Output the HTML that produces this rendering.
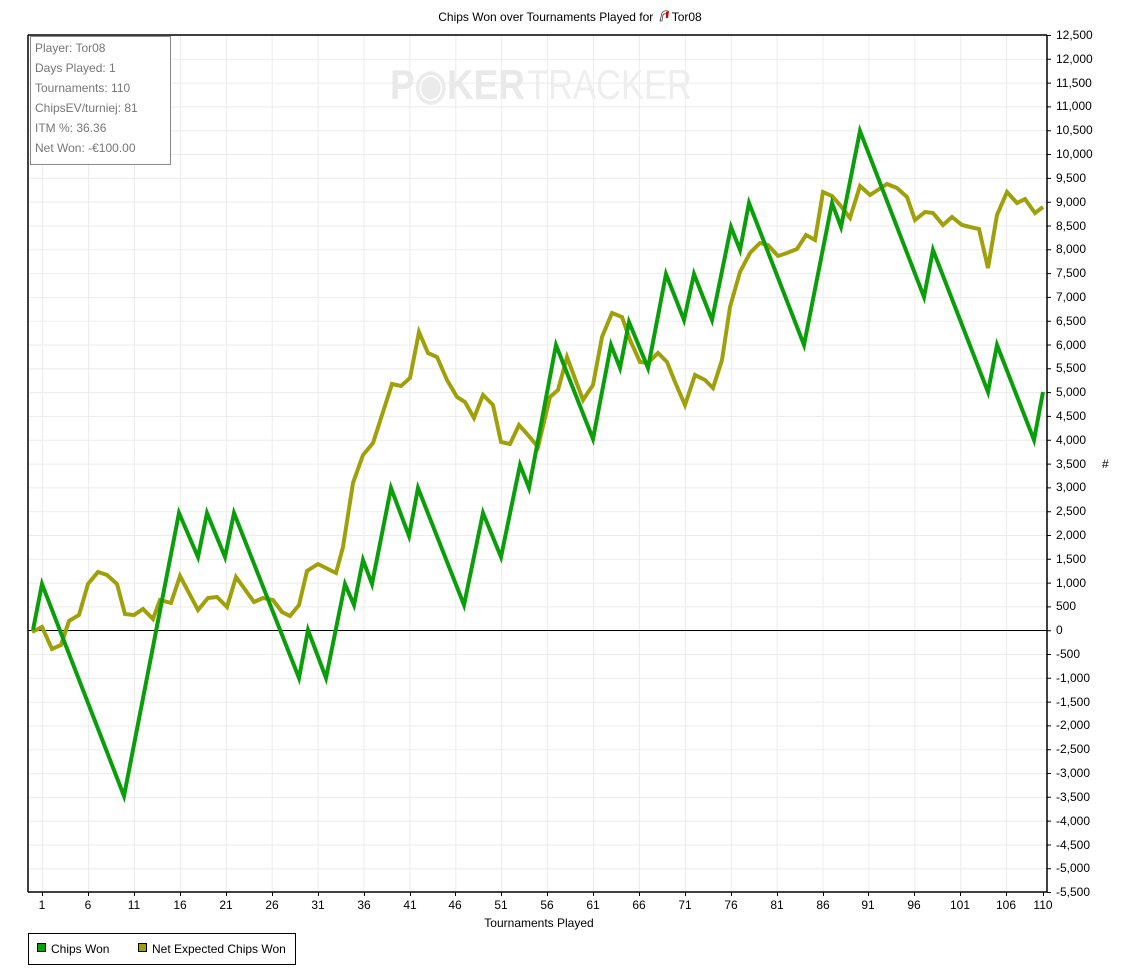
<!DOCTYPE html>
<html><head><meta charset="utf-8"><style>
html,body{margin:0;padding:0;background:#fff;}
svg{display:block;font-family:"Liberation Sans",sans-serif;}
</style></head><body>
<svg width="1132" height="980" viewBox="0 0 1132 980" xmlns="http://www.w3.org/2000/svg">
<defs>
<pattern id="gh" x="0" y="35" width="2000" height="23.81" patternUnits="userSpaceOnUse"><line x1="0" y1="0.5" x2="2000" y2="0.5" stroke="#ececec" stroke-width="1"/></pattern>
<pattern id="gv" x="42.2" y="0" width="45.9" height="2000" patternUnits="userSpaceOnUse"><line x1="0.5" y1="0" x2="0.5" y2="2000" stroke="#ececec" stroke-width="1"/></pattern>
</defs>
<rect x="28" y="35" width="1019" height="857" fill="url(#gh)"/>
<rect x="28" y="35" width="1019" height="857" fill="url(#gv)"/>
<text x="570" y="21" font-size="12" text-anchor="middle" fill="#000">Chips Won over Tournaments Played for <tspan fill="#fff">xx</tspan> Tor08</text>
<g transform="translate(658,10)"><path d="M2 11 L4 3 Q6 0 10 1 L9 4 Q6 3 5 5 L4 11 Z" fill="#fff" stroke="#444" stroke-width="0.8"/><path d="M8 2 L11 1 L10 8 L8 8 Z" fill="#c00"/></g>
<text x="390" y="99" font-size="42" font-weight="bold" fill="#e9e9e9" textLength="135" lengthAdjust="spacingAndGlyphs">P<tspan fill="#ebebeb">◉</tspan>KER</text>
<text x="527" y="99" font-size="42" fill="#eeeeee" textLength="165" lengthAdjust="spacingAndGlyphs">TRACKER</text>
<line x1="28" y1="630.5" x2="1047" y2="630.5" stroke="#000" stroke-width="1"/>
<polyline fill="none" stroke="#9fa10b" stroke-width="4" stroke-linejoin="miter" points="32,632 42,627 52,649 61,645 69,621 79,615 88,584 98,572 107,575 117,584 125,614 134,615 143,609 153,619 160,600 171,603 180,576 198,610 208,598 217,597 227,607 236,577 254,602 263,598 273,600 282,612 290,616 299,605 307,571 318,564 336,573 343,547 353,483 363,455 373,443 392,384 401,386 410,378 419,332 428,353 437,357 447,380 457,397 465,402 474,418 483,395 493,405 501,442 510,444 519,425 528,435 538,447 550,397 558,390 567,357 583,400 593,385 602,337 612,313 622,317 630,340 640,362 648,363 658,353 667,362 675,382 685,405 695,375 705,380 713,388 722,360 730,307 740,272 750,253 760,243 768,245 778,256 787,253 797,249 806,235 815,240 823,192 832,196 840,205 850,218 860,186 870,195 887,184 897,188 907,197 915,220 925,212 933,213 943,225 952,217 962,225 970,227 979,229 988,268 997,215 1007,192 1017,203 1025,199 1035,213 1043,207"/>
<polyline fill="none" stroke="#0b9e0b" stroke-width="4" stroke-linejoin="miter" points="33,630 42,584 124,796 179,513 198,557 207,513 225,557 234,513 299,678 308,630 326,678 345,584 354,605 363,560 372,584 391,488 409,536 418,488 464,605 483,513 501,557 520,465 529,488 556,345 593,439 611,345 620,368 629,322 648,368 666,274 684,320 694,274 712,320 731,227 740,250 749,203 804,345 832,203 841,227 860,131 924,297 933,250 988,392 997,345 1034,440 1043,392"/>
<line x1="28" y1="35" x2="1047" y2="35" stroke="#000" stroke-width="1.5"/>
<line x1="28" y1="35" x2="28" y2="892" stroke="#000" stroke-width="1.5"/>
<line x1="28" y1="892" x2="1047" y2="892" stroke="#000" stroke-width="1.5"/>
<line x1="1047" y1="35" x2="1047" y2="892" stroke="#000" stroke-width="1.5"/>
<rect x="30.5" y="36.5" width="140" height="128" fill="#fff" stroke="#888" stroke-width="1"/>
<g font-size="12" fill="#777">
<text x="35" y="52">Player: Tor08</text>
<text x="35" y="72">Days Played: 1</text>
<text x="35" y="92">Tournaments: 110</text>
<text x="35" y="112">ChipsEV/turniej: 81</text>
<text x="35" y="132">ITM %: 36.36</text>
<text x="35" y="152">Net Won: -€100.00</text>
</g>
<g font-size="12" fill="#000">
<text x="1056" y="39">12,500</text><text x="1056" y="63">12,000</text><text x="1056" y="87">11,500</text><text x="1056" y="110">11,000</text><text x="1056" y="134">10,500</text><text x="1056" y="158">10,000</text><text x="1056" y="182">9,500</text><text x="1056" y="206">9,000</text><text x="1056" y="230">8,500</text><text x="1056" y="253">8,000</text><text x="1056" y="277">7,500</text><text x="1056" y="301">7,000</text><text x="1056" y="325">6,500</text><text x="1056" y="349">6,000</text><text x="1056" y="372">5,500</text><text x="1056" y="396">5,000</text><text x="1056" y="420">4,500</text><text x="1056" y="444">4,000</text><text x="1056" y="468">3,500</text><text x="1056" y="491">3,000</text><text x="1056" y="515">2,500</text><text x="1056" y="539">2,000</text><text x="1056" y="563">1,500</text><text x="1056" y="587">1,000</text><text x="1056" y="610">500</text><text x="1056" y="634">0</text><text x="1056" y="658">-500</text><text x="1056" y="682">-1,000</text><text x="1056" y="706">-1,500</text><text x="1056" y="729">-2,000</text><text x="1056" y="753">-2,500</text><text x="1056" y="777">-3,000</text><text x="1056" y="801">-3,500</text><text x="1056" y="825">-4,000</text><text x="1056" y="849">-4,500</text><text x="1056" y="872">-5,000</text><text x="1056" y="896">-5,500</text>
<text x="1102" y="468">#</text>
</g>
<g stroke="#000" stroke-width="1">
<path d="M1047 35.5h4M1047 59.3h4M1047 83.1h4M1047 106.9h4M1047 130.7h4M1047 154.5h4M1047 178.4h4M1047 202.2h4M1047 226h4M1047 249.8h4M1047 273.6h4M1047 297.4h4M1047 321.2h4M1047 345h4M1047 368.8h4M1047 392.6h4M1047 416.4h4M1047 440.2h4M1047 464.1h4M1047 487.9h4M1047 511.7h4M1047 535.5h4M1047 559.3h4M1047 583.1h4M1047 606.9h4M1047 630.7h4M1047 654.5h4M1047 678.3h4M1047 702.1h4M1047 725.9h4M1047 749.7h4M1047 773.5h4M1047 797.3h4M1047 821.1h4M1047 845h4M1047 868.8h4M1047 892.5h4"/>
<path d="M42.5 892v4M88.5 892v4M134.5 892v4M180.5 892v4M226.5 892v4M272.5 892v4M318.5 892v4M364.5 892v4M410.5 892v4M455.5 892v4M501.5 892v4M547.5 892v4M593.5 892v4M639.5 892v4M685.5 892v4M731.5 892v4M777.5 892v4M823.5 892v4M868.5 892v4M914.5 892v4M960.5 892v4M1006.5 892v4M1043.5 892v4"/>
</g>
<g font-size="12" fill="#000" text-anchor="middle">
<text x="42" y="909">1</text><text x="88" y="909">6</text><text x="134" y="909">11</text><text x="180" y="909">16</text><text x="226" y="909">21</text><text x="272" y="909">26</text><text x="318" y="909">31</text><text x="364" y="909">36</text><text x="410" y="909">41</text><text x="455" y="909">46</text><text x="501" y="909">51</text><text x="547" y="909">56</text><text x="593" y="909">61</text><text x="639" y="909">66</text><text x="685" y="909">71</text><text x="731" y="909">76</text><text x="777" y="909">81</text><text x="823" y="909">86</text><text x="868" y="909">91</text><text x="914" y="909">96</text><text x="960" y="909">101</text><text x="1006" y="909">106</text><text x="1043" y="909">110</text>
<text x="539" y="927">Tournaments Played</text>
</g>
<rect x="28.5" y="933.5" width="267" height="31" fill="#fff" stroke="#000" stroke-width="1"/>
<rect x="37.5" y="943.5" width="8" height="8" fill="#0b9e0b" stroke="#000" stroke-width="1"/>
<text x="51" y="953" font-size="12" fill="#000">Chips Won</text>
<rect x="138.5" y="943.5" width="8" height="8" fill="#9fa10b" stroke="#000" stroke-width="1"/>
<text x="152" y="953" font-size="12" fill="#000">Net Expected Chips Won</text>
</svg>
</body></html>
